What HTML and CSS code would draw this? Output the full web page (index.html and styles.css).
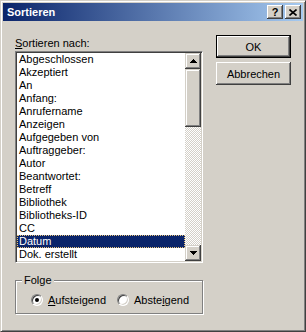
FILE: index.html
```html
<!DOCTYPE html>
<html lang="de">
<head>
    <meta charset="UTF-8">
    <title>Sortieren</title>
    <link rel="stylesheet" href="styles.css">
</head>
<body>
    <div class="window">
        <div class="titlebar">
            <span class="title">Sortieren</span>
            <span class="tb-btn help">?</span>
            <span class="tb-btn">
                <svg width="8" height="7" viewBox="0 0 8 7"><path d="M0.5 0.5l7 6M7.5 0.5l-7 6" stroke="#000" stroke-width="1.6" fill="none"/></svg>
            </span>
        </div>
        <div class="content">
            <div class="left">
                <div class="label"><u>S</u>ortieren nach:</div>
                <div class="listbox">
                    <ul class="items">
                        <li>Abgeschlossen</li>
                        <li>Akzeptiert</li>
                        <li>An</li>
                        <li>Anfang:</li>
                        <li>Anrufername</li>
                        <li>Anzeigen</li>
                        <li>Aufgegeben von</li>
                        <li>Auftraggeber:</li>
                        <li>Autor</li>
                        <li>Beantwortet:</li>
                        <li>Betreff</li>
                        <li>Bibliothek</li>
                        <li>Bibliotheks-ID</li>
                        <li>CC</li>
                        <li class="selected">Datum</li>
                        <li>Dok. erstellt</li>
                    </ul>
                    <div class="scrollbar">
                        <div class="sb-btn">
                            <svg width="7" height="4" viewBox="0 0 7 4"><path d="M3 0h1v1h1v1h1v1h1v1H0V3h1V2h1V1h1z"/></svg>
                        </div>
                        <div class="track"><div class="thumb"></div></div>
                        <div class="sb-btn">
                            <svg width="7" height="4" viewBox="0 0 7 4"><path d="M0 0h7v1H6v1H5v1H4v1H3V3H2V2H1V1H0z"/></svg>
                        </div>
                    </div>
                </div>
                <fieldset class="group">
                    <legend>Folge</legend>
                    <div class="opts">
                        <label class="opt"><span class="radio checked"></span><u>A</u>ufsteigend</label>
                        <label class="opt"><span class="radio"></span>Abste<u>i</u>gend</label>
                    </div>
                </fieldset>
            </div>
            <div class="buttons">
                <button class="btn default">OK</button>
                <button class="btn">Abbrechen</button>
            </div>
        </div>
    </div>
</body>
</html>
```

FILE: styles.css
```css
/* Dialog im Windows-2000-Stil */
* {
    box-sizing: border-box;
}
body {
    margin: 0;
    font-family: "Liberation Sans", Arial, sans-serif;
    font-size: 11px;
    color: #000;
    background: #d4d0c8;
}
.window {
    width: 306px;
    height: 332px;
    background: #d4d0c8;
    border: 1px solid;
    border-color: #d4d0c8 #404040 #404040 #d4d0c8;
    box-shadow: inset 1px 1px #fff, inset -1px -1px #808080;
    padding: 2px;
}
.titlebar {
    height: 18px;
    display: flex;
    align-items: center;
    padding: 0 2px;
    background: linear-gradient(to right, #0a246a, #a6caf0);
    color: #fff;
    font-weight: bold;
}
.title {
    flex: 1;
    padding-left: 2px;
}
.tb-btn {
    width: 16px;
    height: 14px;
    display: flex;
    align-items: center;
    justify-content: center;
    background: #d4d0c8;
    color: #000;
    box-shadow: inset -1px -1px #404040, inset 1px 1px #fff, inset -2px -2px #808080;
}
.help {
    margin-right: 2px;
    font-size: 11px;
}
.content {
    display: flex;
    gap: 13px;
    padding: 14px 0 0 12px;
}
.left {
    width: 188px;
}
.label {
    margin: 2px 0 1px;
    line-height: 13px;
}
.listbox {
    height: 212px;
    display: flex;
    background: #fff;
    border: 1px solid;
    border-color: #808080 #fff #fff #808080;
    padding: 1px;
    box-shadow: inset 1px 1px #404040, inset -1px -1px #d4d0c8;
}
.items {
    flex: 1;
    list-style: none;
    margin: 0;
    padding: 0;
    overflow: hidden;
}
.items li {
    height: 13px;
    line-height: 13px;
    padding-left: 2px;
    white-space: nowrap;
}
.items li.selected {
    background: #0a246a;
    color: #fff;
    outline: 1px dotted #e8c47a;
    outline-offset: -1px;
}
.scrollbar {
    width: 16px;
    display: flex;
    flex-direction: column;
}
.sb-btn, .thumb {
    background: #d4d0c8;
    box-shadow: inset -1px -1px #404040, inset 1px 1px #d4d0c8, inset -2px -2px #808080, inset 2px 2px #fff;
}
.sb-btn {
    height: 16px;
    display: flex;
    align-items: center;
    justify-content: center;
}
.track {
    flex: 1;
    background: repeating-conic-gradient(#d4d0c8 0 25%, #fff 0 50%) 0 0 / 2px 2px;
}
.thumb {
    height: 58px;
}
.group {
    margin: 11px 0 0;
    padding: 0 6px 7px;
    border: 1px solid #808080;
    box-shadow: 1px 1px #fff, inset 1px 1px #fff;
    min-width: 0;
}
.group legend {
    padding: 0 2px;
    line-height: 13px;
    background: #d4d0c8;
}
.opts {
    display: flex;
    margin-top: 6px;
    padding-left: 9px;
}
.opt {
    display: flex;
    align-items: center;
    height: 13px;
    min-width: 86px;
}
.radio {
    width: 12px;
    height: 12px;
    margin-right: 5px;
    border-radius: 50%;
    background: #fff;
    border: 1px solid;
    border-color: #808080 #fff #fff #808080;
    box-shadow: inset 1px 1px #404040, inset -1px -1px #d4d0c8;
    display: flex;
    align-items: center;
    justify-content: center;
}
.radio.checked::after {
    content: "";
    width: 4px;
    height: 4px;
    border-radius: 50%;
    background: #000;
}
.buttons {
    display: flex;
    flex-direction: column;
    gap: 4px;
}
.btn {
    width: 75px;
    height: 23px;
    padding: 0;
    font: inherit;
    color: #000;
    background: #d4d0c8;
    border: none;
    box-shadow: inset -1px -1px #404040, inset 1px 1px #fff, inset -2px -2px #808080, inset 2px 2px #d4d0c8;
}
.btn.default {
    border: 1px solid #000;
}
```
